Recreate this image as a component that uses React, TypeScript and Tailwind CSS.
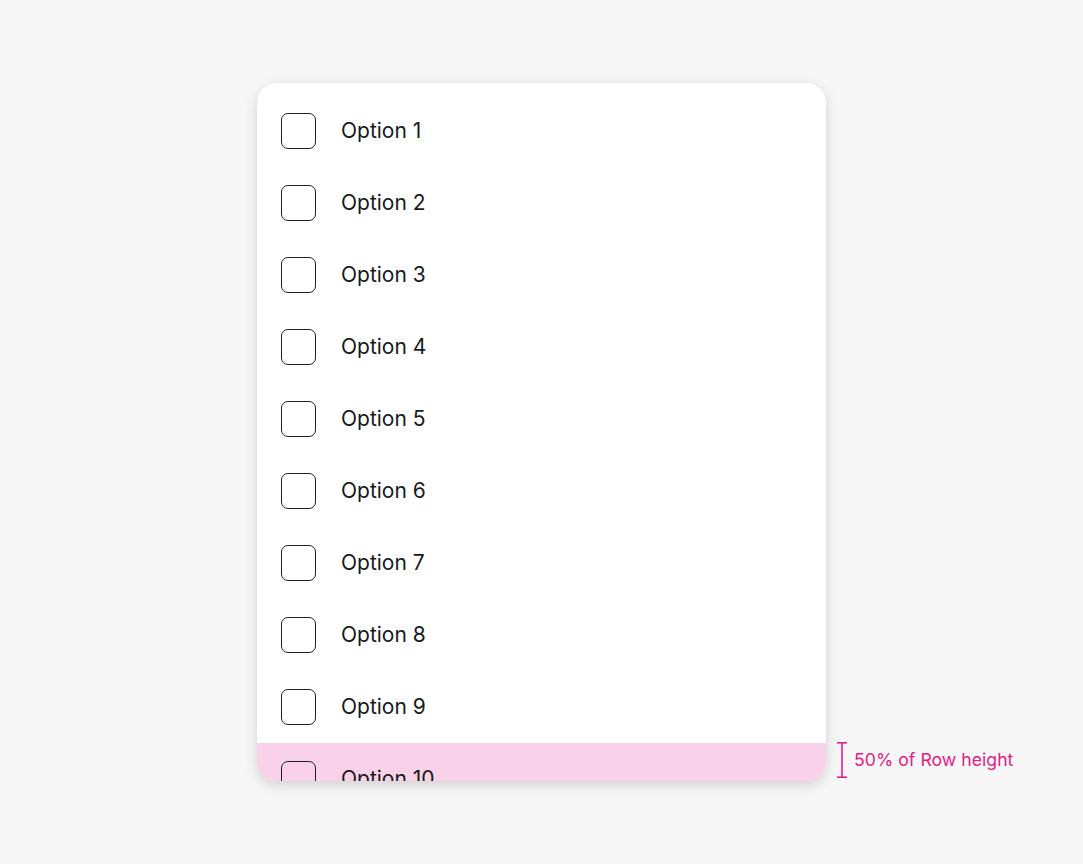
const OPTIONS = Array.from({ length: 10 }, (_, i) => `Option ${i + 1}`);

function Checkbox() {
  return <span className="block w-[35px] h-[36px] shrink-0 rounded-[7px] border-[1.75px] border-[#1f1f1f] bg-transparent" />;
}

function Bracket() {
  return (
    <svg width="10" height="36" viewBox="0 0 10 36" className="shrink-0">
      <g stroke="#e41d86" strokeWidth="1.6" fill="none">
        <line x1="0" y1="0.8" x2="10" y2="0.8" />
        <line x1="5" y1="0.8" x2="5" y2="35.2" />
        <line x1="0" y1="35.2" x2="10" y2="35.2" />
      </g>
    </svg>
  );
}

export default function App() {
  return (
    <div
      className="min-h-[864px] bg-[#f7f7f7] pt-[83px] pl-[257px]"
      style={{ fontFamily: "Inter, 'Noto Sans', sans-serif" }}
    >
      <div className="flex items-end">
        {/* List panel */}
        <div className="w-[569px] h-[698px] bg-white rounded-[20px] overflow-hidden shadow-[0_4px_14px_rgba(0,0,0,0.16)] pt-[12px]">
          {OPTIONS.map((label, i) => (
            <div
              key={label}
              className={`flex items-center h-[72px] pl-[24px] gap-[25px] ${i === 9 ? "bg-[#f9d1e8]" : ""}`}
            >
              <Checkbox />
              <span className="text-[21px] text-[#1a1a1a]">{label}</span>
            </div>
          ))}
        </div>

        {/* Annotation */}
        <div className="flex items-center gap-[7px] ml-[11px] mb-[3px]">
          <Bracket />
          <span className="text-[17.7px] text-[#e41d86]">50% of Row height</span>
        </div>
      </div>
    </div>
  );
}
